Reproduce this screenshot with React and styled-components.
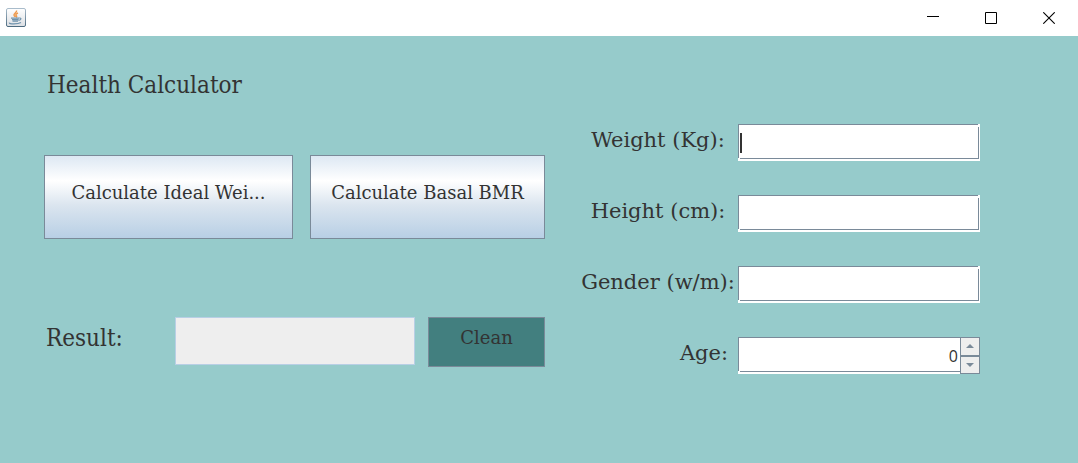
import React, { useState } from 'react';
import styled, { createGlobalStyle } from 'styled-components';

const Global = createGlobalStyle`
  * { box-sizing: border-box; }
  body { margin: 0; background: #96cbcb; color: #333; font-family: "DejaVu Serif", serif; }
  button, input { font: inherit; color: inherit; }
`;

const condensed = '"DejaVu Serif Condensed", "DejaVu Serif", serif';

const Window = styled.div`
  min-height: 100vh;
  background: #96cbcb;
`;

const TitleBar = styled.header`
  display: flex;
  align-items: center;
  justify-content: space-between;
  height: 36px;
  padding-left: 6px;
  background: #fff;
`;

const AppIcon = styled.svg`
  display: block;
  width: 20px;
  height: 20px;
`;

const WindowControls = styled.div`
  display: flex;
`;

const WindowButton = styled.button`
  display: grid;
  place-items: center;
  width: 58px;
  height: 34px;
  padding: 0;
  border: 0;
  background: none;

  svg { display: block; width: 12px; height: 12px; }
`;

const Content = styled.main`
  display: grid;
  grid-template-columns: minmax(0, 501fr) minmax(0, 435fr);
  padding: 35px 98px 36px 44px;
`;

const Heading = styled.h1`
  margin: 0;
  padding-left: 3px;
  font-family: ${condensed};
  font-size: 24px;
  line-height: 28px;
  font-weight: 400;
`;

const Actions = styled.div`
  display: grid;
  grid-template-columns: minmax(0, 249fr) minmax(0, 235fr);
  gap: 17px;
  margin-top: 56px;
`;

const ActionButton = styled.button`
  height: 84px;
  padding: 0 16px 10px;
  overflow: hidden;
  border: 1px solid #7a8a99;
  background: linear-gradient(#dde8f3, #fff 30%, #dbe5ef 60%, #b8cfe5);
  font-size: 18px;
  text-overflow: ellipsis;
  white-space: nowrap;
`;

const ResultRow = styled.div`
  display: grid;
  grid-template-columns: minmax(0, 118fr) minmax(0, 240fr) minmax(0, 117fr);
  column-gap: 13px;
  margin-top: 78px;
  align-items: start;
`;

const ResultLabel = styled.label`
  padding: 7px 0 0 2px;
  font-family: ${condensed};
  font-size: 24px;
  line-height: 28px;
`;

const ResultField = styled.input`
  width: 100%;
  height: 48px;
  border: 1px solid #b8cfe5;
  background: #eee;
`;

const CleanButton = styled.button`
  height: 50px;
  padding: 0 0 10px;
  border: 1px solid #7a8a99;
  background: #427f7f;
  font-size: 18px;
`;

const Form = styled.form`
  display: grid;
  gap: 34px;
  margin-top: 53px;
`;

const FormRow = styled.div`
  display: grid;
  grid-template-columns: minmax(0, 193fr) minmax(0, 242fr);
`;

const FieldLabel = styled.label`
  width: 154px;
  margin-left: auto;
  margin-right: 3px;
  padding-right: ${(p) => (p.$end ? 7 : 0)}px;
  font-size: 21px;
  line-height: 32px;
  text-align: ${(p) => (p.$end ? 'right' : 'center')};
  white-space: nowrap;
`;

const line = 'linear-gradient(#7a8a99, #7a8a99)';

const Field = styled.div`
  position: relative;
  display: flex;
  height: 37px;
  background:
    ${line} 0 0 / calc(100% - 2px) 1px no-repeat,
    ${line} 0 0 / 1px calc(100% - 3px) no-repeat,
    ${line} 2px calc(100% - 2px) / calc(100% - 3px) 1px no-repeat,
    ${line} calc(100% - 1px) 3px / 1px calc(100% - 5px) no-repeat,
    #fff;
`;

const Input = styled.input`
  flex: 1;
  min-width: 0;
  padding: 0 2px;
  border: 0;
  outline: 0;
  background: none;
  font-family: "Open Sans", sans-serif;
  font-size: 16px;
  text-align: ${(p) => (p.$number ? 'right' : 'left')};
`;

const Caret = styled.span`
  position: absolute;
  top: 9px;
  left: 2px;
  width: 2px;
  height: 20px;
  background: #333;
`;

const Stepper = styled.div`
  display: grid;
  grid-template-rows: 1fr 1fr;
  width: 20px;
`;

const StepButton = styled.button`
  display: grid;
  place-items: center;
  padding: 0;
  border: 1px solid #7a8a99;
  background: #eee;

  svg { display: block; width: 8px; height: 4px; }
`;

function JavaIcon() {
  return (
    <AppIcon viewBox="0 0 20 20" aria-hidden="true">
      <defs>
        <linearGradient id="face" x2="0" y2="1">
          <stop stopColor="#fff" />
          <stop offset="1" stopColor="#dcdfe3" />
        </linearGradient>
        <linearGradient id="edge" x2="0" y2="1">
          <stop stopColor="#a9bccb" />
          <stop offset="1" stopColor="#4d6b80" />
        </linearGradient>
      </defs>
      <rect x=".5" y=".5" width="19" height="18" rx="1.5" fill="url(#face)" stroke="url(#edge)" />
      <path d="M10.500 2.500c.8 2-3.500 3-2.400 5 .4.800 1 1 1 1.500M12 5c-2.500 1-2.500 2-1.500 3 .4.600 0 1-.5 1.300" fill="none" stroke="#ee9a4d" strokeWidth="1.500" />
      <path d="M5 10.200h8M6 11.700h6.500M6.500 13.200h5.500M13.200 10.100c2.500-.5 2.300 1.800-.7 2.300M3.500 14.700c-1 1.500 8.500 1.600 11.500-.1" fill="none" stroke="#6f93ad" strokeWidth="1.200" />
    </AppIcon>
  );
}

export default function App() {
  const [values, setValues] = useState({ weight: '', height: '', gender: '' });
  const [age, setAge] = useState(0);
  const bind = (key) => ({
    id: key,
    value: values[key],
    onChange: (e) => setValues({ ...values, [key]: e.target.value }),
  });

  return (
    <Window>
      <Global />
      <TitleBar>
        <JavaIcon />
        <WindowControls>
          <WindowButton aria-label="Minimize">
            <svg viewBox="0 0 12 12"><path d="M0 4.500h12" stroke="#000" /></svg>
          </WindowButton>
          <WindowButton aria-label="Maximize">
            <svg viewBox="0 0 12 12"><path d="M.5.5h11v11H.5z" fill="none" stroke="#000" /></svg>
          </WindowButton>
          <WindowButton aria-label="Close">
            <svg viewBox="0 0 12 12"><path d="M.3.3l11.400 11.400M11.700.3L.3 11.700" stroke="#000" strokeWidth="1.100" /></svg>
          </WindowButton>
        </WindowControls>
      </TitleBar>
      <Content>
        <section>
          <Heading>Health Calculator</Heading>
          <Actions>
            <ActionButton>Calculate Ideal Wei...</ActionButton>
            <ActionButton>Calculate Basal BMR</ActionButton>
          </Actions>
          <ResultRow>
            <ResultLabel htmlFor="result">Result:</ResultLabel>
            <ResultField id="result" readOnly />
            <CleanButton>Clean</CleanButton>
          </ResultRow>
        </section>
        <Form>
          <FormRow>
            <FieldLabel htmlFor="weight">Weight (Kg):</FieldLabel>
            <Field><Input {...bind('weight')} /><Caret /></Field>
          </FormRow>
          <FormRow>
            <FieldLabel htmlFor="height">Height (cm):</FieldLabel>
            <Field><Input {...bind('height')} /></Field>
          </FormRow>
          <FormRow>
            <FieldLabel htmlFor="gender">Gender (w/m):</FieldLabel>
            <Field><Input {...bind('gender')} /></Field>
          </FormRow>
          <FormRow>
            <FieldLabel htmlFor="age" $end>Age:</FieldLabel>
            <Field>
              <Input id="age" $number value={age} onChange={(e) => setAge(Number(e.target.value) || 0)} />
              <Stepper>
                <StepButton type="button" aria-label="Increase age" onClick={() => setAge(age + 1)}>
                  <svg viewBox="0 0 8 4"><path d="M0 4L4 0l4 4z" fill="#7a8a99" /></svg>
                </StepButton>
                <StepButton type="button" aria-label="Decrease age" onClick={() => setAge(age - 1)}>
                  <svg viewBox="0 0 8 4"><path d="M0 0l4 4 4-4z" fill="#7a8a99" /></svg>
                </StepButton>
              </Stepper>
            </Field>
          </FormRow>
        </Form>
      </Content>
    </Window>
  );
}
